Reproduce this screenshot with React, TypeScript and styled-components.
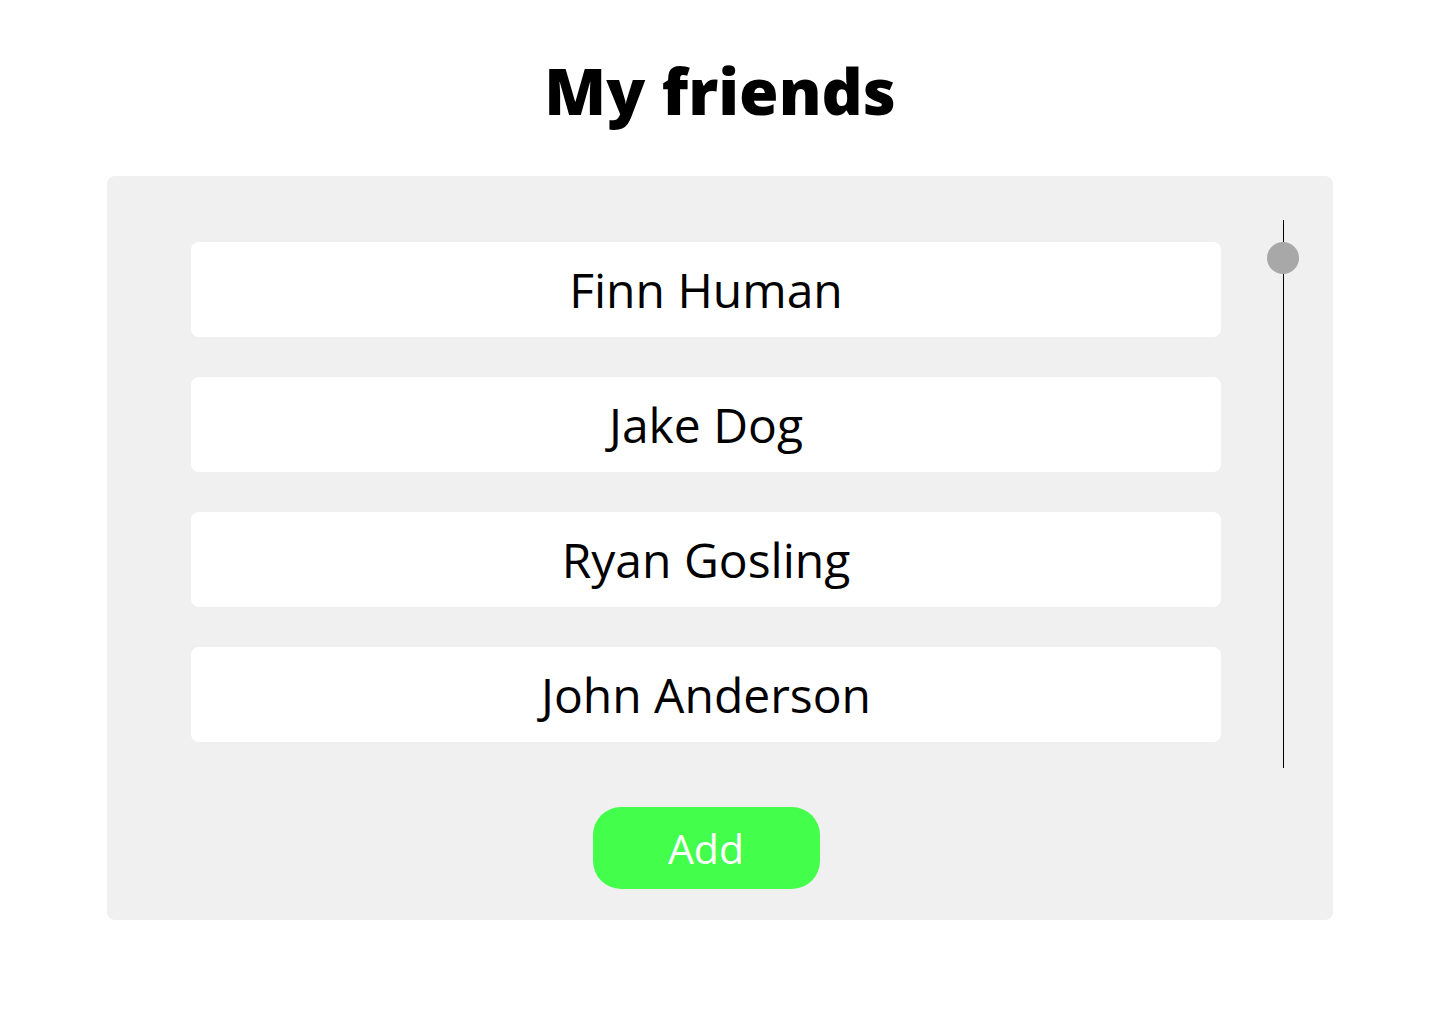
import React from "react";
import styled, { createGlobalStyle } from "styled-components";

const Global = createGlobalStyle`
  html, body { margin: 0; padding: 0; background: #ffffff; }
  body { font-family: "Open Sans", "Noto Sans", sans-serif; color: #000; }
`;

const Page = styled.main`
  display: flex;
  flex-direction: column;
  align-items: center;
  padding-top: 47px;
`;

const Title = styled.h1`
  margin: 0 0 42px;
  font-size: 64px;
  font-weight: 800;
  line-height: 87px;
  text-align: center;
`;

const Panel = styled.section`
  box-sizing: border-box;
  width: 1226px;
  background: #f0f0f0;
  border-radius: 8px;
  padding: 44px 49px 31px 84px;
  display: grid;
  grid-template-columns: 1030px 1fr;
  column-gap: 0;
`;

const ListArea = styled.div`
  display: flex;
  flex-direction: column;
  align-items: center;
`;

const List = styled.ul`
  list-style: none;
  margin: 0;
  padding: 22px 0 0;
  height: 548px;
  box-sizing: border-box;
  width: 100%;
  display: flex;
  flex-direction: column;
  gap: 40px;
`;

const Row = styled.li`
  height: 95px;
  background: #ffffff;
  border-radius: 8px;
  display: flex;
  align-items: center;
  justify-content: center;
  font-size: 48px;
  font-weight: 400;
`;

const AddButton = styled.button`
  margin-top: 39px;
  width: 227px;
  height: 82px;
  border: none;
  border-radius: 28px;
  background: #43ff4b;
  color: #ffffff;
  font-family: "Open Sans", "Noto Sans", sans-serif;
  font-size: 41px;
  font-weight: 400;
  cursor: pointer;
`;

const Track = styled.div`
  justify-self: end;
  position: relative;
  width: 1px;
  height: 548px;
  background: #000;
`;

const Thumb = styled.div`
  position: absolute;
  top: 22px;
  left: -16px;
  width: 32px;
  height: 32px;
  border-radius: 50%;
  background: #a8a8a8;
`;

const friends = ["Finn Human", "Jake Dog", "Ryan Gosling", "John Anderson"];

export default function App() {
  return (
    <>
      <Global />
      <Page>
        <Title>My friends</Title>
        <Panel>
          <ListArea>
            <List>
              {friends.map((f) => (
                <Row key={f}>{f}</Row>
              ))}
            </List>
            <AddButton>Add</AddButton>
          </ListArea>
          <Track>
            <Thumb />
          </Track>
        </Panel>
      </Page>
    </>
  );
}
